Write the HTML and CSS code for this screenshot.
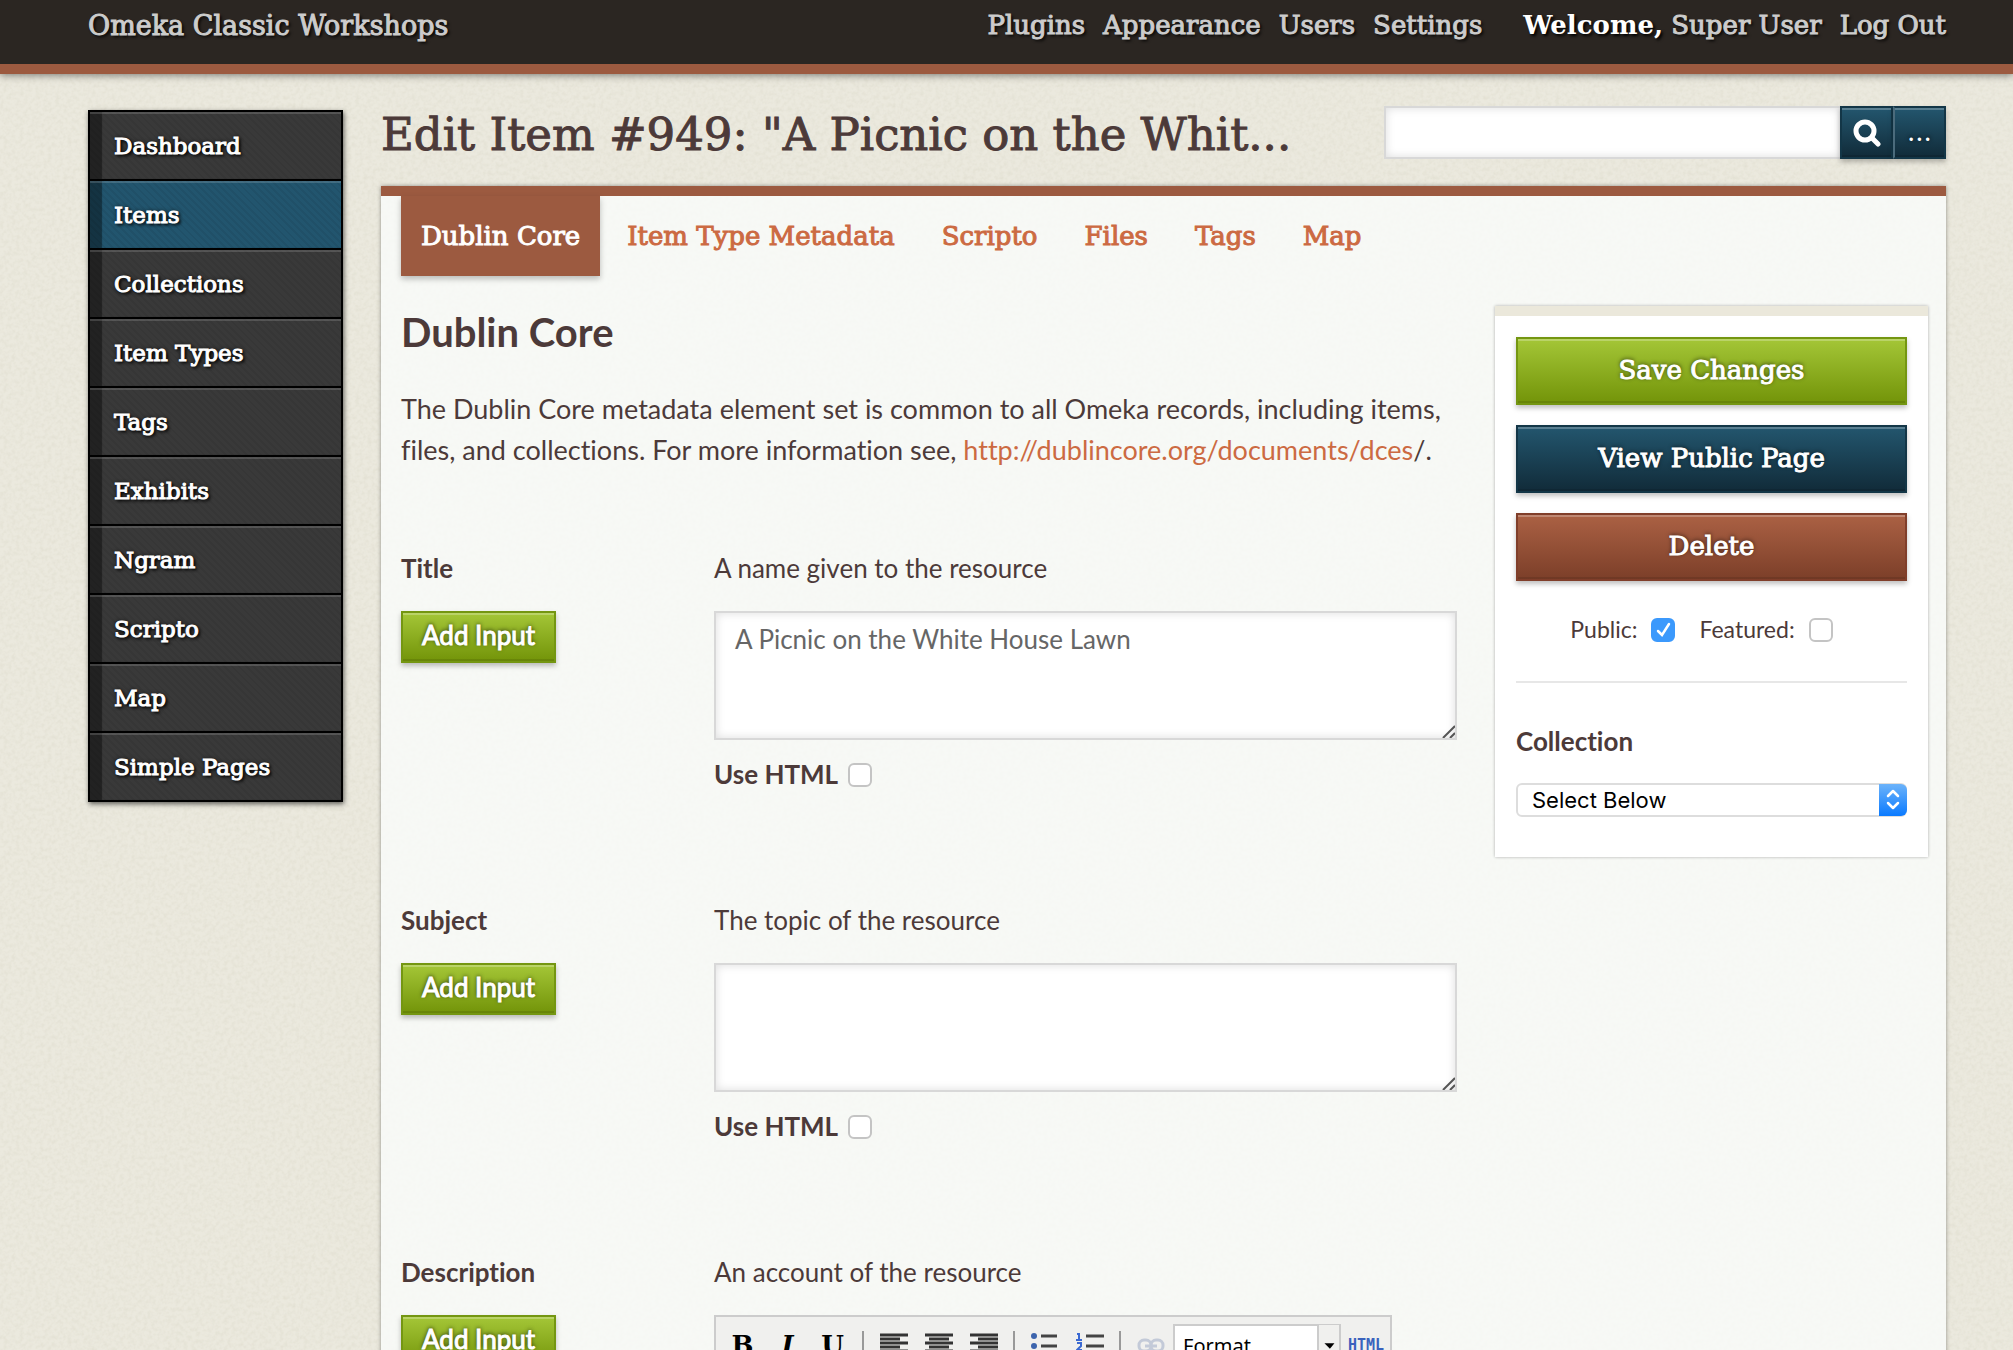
FILE: index.html
```html
<!DOCTYPE html>
<html lang="en">
<head>
  <meta charset="UTF-8">
  <meta name="viewport" content="width=device-width, initial-scale=1.0">
  <title>Edit Item #949 - Omeka Classic Workshops</title>
  <link rel="stylesheet" href="styles.css">
</head>
<body>
  <header id="header">
    <a class="site-title" href="#">Omeka Classic Workshops</a>
    <nav class="global-nav">
      <a href="#">Plugins</a>
      <a href="#">Appearance</a>
      <a href="#">Users</a>
      <a href="#">Settings</a>
    </nav>
    <div class="user-nav">
      <span><b>Welcome,</b> <a href="#">Super User</a></span>
      <a href="#">Log Out</a>
    </div>
  </header>

  <div id="wrap">
    <ul id="content-nav">
      <li><a href="#">Dashboard</a></li>
      <li class="active"><a href="#">Items</a></li>
      <li><a href="#">Collections</a></li>
      <li><a href="#">Item Types</a></li>
      <li><a href="#">Tags</a></li>
      <li><a href="#">Exhibits</a></li>
      <li><a href="#">Ngram</a></li>
      <li><a href="#">Scripto</a></li>
      <li><a href="#">Map</a></li>
      <li><a href="#">Simple Pages</a></li>
    </ul>

    <main id="main">
      <div class="title-row">
        <h1>Edit Item #949: "A Picnic on the Whit...</h1>
        <form class="search">
          <input type="text" aria-label="Search">
          <button type="button" class="blue" aria-label="Submit search">
            <svg width="28" height="28" viewBox="0 0 28 28"><circle cx="12" cy="12" r="9" fill="none" stroke="#fff" stroke-width="5"/><path d="M19 19L25 25" stroke="#fff" stroke-width="5" stroke-linecap="round"/></svg>
          </button>
          <button type="button" class="blue">...</button>
        </form>
      </div>

      <div id="content">
        <ul class="tabs">
          <li class="current"><a href="#">Dublin Core</a></li>
          <li><a href="#">Item Type Metadata</a></li>
          <li><a href="#">Scripto</a></li>
          <li><a href="#">Files</a></li>
          <li><a href="#">Tags</a></li>
          <li><a href="#">Map</a></li>
        </ul>

        <div class="columns">
          <section class="elements">
            <h2>Dublin Core</h2>
            <p class="intro">The Dublin Core metadata element set is common to all Omeka records, including items, files, and collections. For more information see, <a href="#">http://dublincore.org/documents/dces</a>/.</p>

            <div class="field">
              <div class="field-name">
                <label for="title">Title</label>
                <button type="button" class="green">Add Input</button>
              </div>
              <div class="inputs">
                <p>A name given to the resource</p>
                <textarea id="title">A Picnic on the White House Lawn</textarea>
                <label class="use-html">Use HTML <input type="checkbox"></label>
              </div>
            </div>

            <div class="field">
              <div class="field-name">
                <label for="subject">Subject</label>
                <button type="button" class="green">Add Input</button>
              </div>
              <div class="inputs">
                <p>The topic of the resource</p>
                <textarea id="subject"></textarea>
                <label class="use-html">Use HTML <input type="checkbox"></label>
              </div>
            </div>

            <div class="field">
              <div class="field-name">
                <label for="description">Description</label>
                <button type="button" class="green">Add Input</button>
              </div>
              <div class="inputs">
                <p>An account of the resource</p>
                <div class="editor">
                  <div class="toolbar">
                    <button type="button"><b>B</b></button>
                    <button type="button"><b><i>I</i></b></button>
                    <button type="button"><b><u>U</u></b></button>
                    <span class="sep"></span>
                    <button type="button" aria-label="Align left"><svg width="28" height="24" viewBox="0 0 28 24"><path d="M0 2h28M0 6h20M0 10h28M0 14h20M0 18h28M0 22h20" stroke="#333" stroke-width="3"/></svg></button>
                    <button type="button" aria-label="Align center"><svg width="28" height="24" viewBox="0 0 28 24"><path d="M0 2h28M4 6h20M0 10h28M4 14h20M0 18h28M4 22h20" stroke="#333" stroke-width="3"/></svg></button>
                    <button type="button" aria-label="Align right"><svg width="28" height="24" viewBox="0 0 28 24"><path d="M0 2h28M8 6h20M0 10h28M8 14h20M0 18h28M8 22h20" stroke="#333" stroke-width="3"/></svg></button>
                    <span class="sep"></span>
                    <button type="button" aria-label="Bulleted list"><svg width="28" height="24" viewBox="0 0 28 24"><path d="M10 3h16M10 13h16M10 23h16" stroke="#444" stroke-width="3"/><circle cx="3" cy="3" r="3" fill="#3d64ad"/><circle cx="3" cy="13" r="3" fill="#3d64ad"/><circle cx="3" cy="22" r="3" fill="#3d64ad"/></svg></button>
                    <button type="button" aria-label="Numbered list"><svg width="28" height="24" viewBox="0 0 28 24"><path d="M10 3h18M10 13h18M10 23h18" stroke="#444" stroke-width="3"/><path d="M1 1h2v6M0 7h6M1 10h4v3l-4 4h5M1 20h4v4" fill="none" stroke="#3a69d2" stroke-width="2"/></svg></button>
                    <span class="sep"></span>
                    <button type="button" aria-label="Insert link"><svg width="28" height="24" viewBox="0 0 28 24"><g fill="none" stroke="#c3cad8" stroke-width="3"><rect x="2" y="7" width="12" height="11" rx="5"/><rect x="14" y="7" width="12" height="11" rx="5"/><path d="M8 13h12"/></g></svg></button>
                    <span class="format">
                      <select aria-label="Format"><option>Format</option></select>
                      <svg width="22" height="40" viewBox="0 0 22 40"><path d="M6 18h11l-5 6z" fill="#000"/></svg>
                    </span>
                    <button type="button" class="html">HTML</button>
                  </div>
                  <textarea id="description"></textarea>
                </div>
              </div>
            </div>
          </section>

          <aside id="save">
            <button type="button" class="big green">Save Changes</button>
            <button type="button" class="big blue">View Public Page</button>
            <button type="button" class="big red">Delete</button>
            <div class="flags">
              <label>Public: <input type="checkbox" checked></label>
              <label>Featured: <input type="checkbox"></label>
            </div>
            <div class="collection">
              <label for="collection">Collection</label>
              <div class="select">
                <select id="collection"><option>Select Below</option></select>
                <svg width="28" height="32" viewBox="0 0 28 32"><path d="M9 12l5-5 5 5M9 19l5 5 5-5" fill="none" stroke="#fff" stroke-width="2.500" stroke-linecap="round" stroke-linejoin="round"/></svg>
              </div>
            </div>
          </aside>
        </div>
      </div>
    </main>
  </div>
</body>
</html>
```

FILE: styles.css
```css
*{
  margin: 0;
  padding: 0;
  box-sizing: border-box;
}
html, body{
  height: 100vh;
  overflow: hidden;
}
body{
  display: flex;
  flex-direction: column;
  font: 26px/41px Lato, sans-serif;
  font-variant-ligatures: none;
  color: #4c3a39;
  /* paper grain */
  background: #ebe9de url("data:image/svg+xml,%3Csvg xmlns='http://www.w3.org/2000/svg' width='300' height='300'%3E%3Cfilter id='n'%3E%3CfeTurbulence type='fractalNoise' baseFrequency='.25' numOctaves='3' stitchTiles='stitch'/%3E%3CfeColorMatrix values='0 0 0 0 .5 0 0 0 0 .48 0 0 0 0 .35 .3 0 0 0 -.11'/%3E%3C/filter%3E%3Crect width='300' height='300' filter='url(%23n)'/%3E%3C/svg%3E");
}
ul{
  list-style: none;
}
a{
  color: #cc6a42;
  text-decoration: none;
}
button, input, select, textarea{
  font: inherit;
}
button{
  border: 0;
  cursor: pointer;
}

/* header */
#header{
  display: flex;
  flex: none;
  height: 74px;
  padding: 5px 67px 0 88px;
  font: 26px/41px "DejaVu Serif", serif;
  color: #fff;
  background: #2b2622;
  border-bottom: 10px solid #9c5a40;
  box-shadow: 0 1px 8px rgba(0,0,0,0.5);
  text-shadow: 2px 2px 3px #000;
}
#header a{
  color: #ccc;
  -webkit-text-stroke: 1px;
}
#header .site-title{
  margin-right: auto;
  font-size: 27px;
}
.global-nav, .user-nav{
  display: flex;
  gap: 18px;
}
.user-nav{
  margin-left: 41px;
}

#wrap{
  display: flex;
  gap: 38px;
  flex: 1;
  padding: 32px 67px 0 88px;
}

/* sidebar */
#content-nav{
  flex: none;
  align-self: flex-start;
  width: 255px;
  margin-top: 4px;
  border: 2px solid #000;
  box-shadow: 1px 2px 5px rgba(0,0,0,0.6);
}
#content-nav li{
  border-bottom: 2px solid #000;
  background: repeating-linear-gradient(45deg, rgba(0,0,0,0.06) 0 2px, transparent 2px 5px), #393939;
  box-shadow: inset 0 2px 0 rgba(255,255,255,0.15), inset 12px 0 1px rgba(0,0,0,0.4);
}
#content-nav li:last-child{
  border-bottom: 0;
}
#content-nav .active{
  background-color: #22556e;
}
#content-nav a{
  display: block;
  padding: 2px 24px 0;
  font: 23px/65px "DejaVu Serif", serif;
  color: #fff;
  -webkit-text-stroke: 1px;
  text-shadow: 0 0 4px #000, 2px 2px 3px #000;
}

#main{
  display: flex;
  flex-direction: column;
  flex: 1;
  min-width: 0;
}
.title-row{
  display: flex;
  justify-content: space-between;
  height: 80px;
}
h1{
  font: 45px/58px "DejaVu Serif", serif;
  -webkit-text-stroke: 1px;
  white-space: nowrap;
}
.search{
  display: flex;
  width: 562px;
  height: 53px;
}
.search input{
  flex: 1;
  min-width: 0;
  padding: 0 16px;
  border: 2px solid #d8d8d8;
  border-right: 0;
  background: #fff;
  box-shadow: inset 0 0 10px #ddd;
}
.search button{
  width: 53px;
  font-family: "DejaVu Serif", serif;
}
.search button + button{
  border-left-color: #4b6b7c;
}
.search svg{
  display: block;
  margin: 0 auto;
}

.green, .blue, .red{
  color: #fff;
  border: 2px solid #749611;
  background: linear-gradient(#a4c637, #739409);
  box-shadow: inset 0 2px 0 rgba(255,255,255,0.25), inset 0 -2px 0 rgba(0,0,0,0.1), 0 3px 5px rgba(0,0,0,0.25);
  text-shadow: 0 -1px 4px rgba(0,0,0,0.8);
}
.blue{
  border-color: #133647;
  background: linear-gradient(#23566e, #112b39);
}
.red{
  border-color: #803e2a;
  background: linear-gradient(#ab6144, #7c3f29);
}

/* content panel */
#content{
  flex: 1;
  padding: 0 18px 0 20px;
  border-top: 10px solid #9c5a40;
  background: rgba(250,253,251,0.8);
  background-clip: padding-box;
  box-shadow: 0 0 4px rgba(0,0,0,0.4);
}
.tabs{
  display: flex;
  gap: 7px;
}
.tabs a{
  display: block;
  padding: 0 20px;
  font: 26px/80px "DejaVu Serif", serif;
  -webkit-text-stroke: 1px;
}
.tabs .current a{
  color: #fff;
  background: #9c5a40;
  box-shadow: 0 3px 6px rgba(0,0,0,0.25);
}

.columns{
  display: flex;
  justify-content: space-between;
  align-items: flex-start;
}
.elements{
  width: 1056px;
}
h2{
  margin: 32px 0;
  font-size: 40px;
  line-height: 48px;
}
.intro{
  margin-bottom: 78px;
  font-size: 27px;
}
.field{
  display: flex;
  height: 352px;
}
.field-name{
  width: 313px;
  font-weight: bold;
}
.field-name label{
  display: block;
}
.field-name button{
  height: 52px;
  margin-top: 22px;
  padding: 0 19px 3px;
  font-weight: normal;
  -webkit-text-stroke: 1px;
}
.inputs{
  flex: 1;
}
.inputs p{
  margin-bottom: 22px;
}
textarea{
  display: block;
  width: 100%;
  height: 129px;
  padding: 6px 19px;
  color: #666;
  border: 2px solid #d8d8d8;
  background: #fff;
  box-shadow: inset 0 0 10px #ddd;
  outline: 0;
}
textarea::-webkit-scrollbar{
  width: 18px;
  height: 18px;
}
textarea::-webkit-resizer{
  background: url("data:image/svg+xml,%3Csvg xmlns='http://www.w3.org/2000/svg' width='18' height='18'%3E%3Cpath d='M3 15L15 3M10 15l5-5' stroke='%23555' stroke-width='2'/%3E%3C/svg%3E");
}
.use-html{
  display: flex;
  align-items: center;
  gap: 10px;
  margin-top: 14px;
  font-weight: bold;
}
input[type="checkbox"]{
  appearance: none;
  width: 24px;
  height: 24px;
  border: 2px solid #c4c4c4;
  border-radius: 6px;
  background: #fff;
}
input[type="checkbox"]:checked{
  border-color: #3b99fc;
  background: #3b99fc url("data:image/svg+xml,%3Csvg xmlns='http://www.w3.org/2000/svg' width='20' height='20'%3E%3Cpath d='M5 11l4 4 7-11' fill='none' stroke='%23fff' stroke-width='2.500' stroke-linecap='round'/%3E%3C/svg%3E");
}

/* html editor */
.editor{
  width: 678px;
  border: 2px solid #ccc;
  background: #f0f0ee;
}
.toolbar{
  display: flex;
  height: 54px;
  padding: 6px 0 6px 4px;
}
.toolbar button{
  flex: none;
  width: 45px;
  height: 44px;
  background: none;
  font: 26px/44px "DejaVu Serif", serif;
  color: #000;
}
.toolbar svg{
  display: block;
  margin: 0 auto;
}
.sep{
  flex: none;
  width: 2px;
  height: 32px;
  margin: 8px 7px;
  background: #999;
}
.format{
  position: relative;
  flex: none;
  width: 168px;
}
.format select{
  appearance: none;
  width: 100%;
  height: 44px;
  padding: 0 8px;
  border: 2px solid #ccc;
  border-radius: 0;
  background: #fff;
  font: 20px "Noto Sans", sans-serif;
  color: #000;
}
.format svg{
  position: absolute;
  top: 2px;
  right: 2px;
  border-left: 2px solid #ccc;
  background: #f0f0ee;
  pointer-events: none;
}
.toolbar .html{
  width: 50px;
  font: bold 15px/44px "DejaVu Sans Mono", monospace;
  color: #3a62bd;
}

/* save panel */
#save{
  width: 433px;
  margin-top: 30px;
  padding: 21px 21px 40px;
  border-top: 10px solid #ebe8db;
  background: #fff;
  box-shadow: 0 0 3px rgba(0,0,0,0.3);
}
.big{
  display: block;
  width: 100%;
  height: 68px;
  margin-bottom: 20px;
  padding-bottom: 2px;
  font: 26px "DejaVu Serif", serif;
  -webkit-text-stroke: 1px;
}
.flags{
  display: flex;
  justify-content: center;
  gap: 24px;
  height: 82px;
  padding: 8px 20px 0 0;
  border-bottom: 2px solid #e7e7e7;
  font-size: 23px;
}
.flags label{
  display: flex;
  align-items: center;
  gap: 14px;
  height: 41px;
}
.collection{
  padding-top: 38px;
}
.collection label{
  display: block;
  margin-bottom: 21px;
  font-weight: bold;
}
.select{
  position: relative;
}
.select select{
  appearance: none;
  display: block;
  width: 100%;
  height: 34px;
  padding: 0 14px;
  border: 2px solid #ddd;
  border-radius: 6px;
  background: #fff;
  font: 22px Inter, sans-serif;
  color: #000;
}
.select svg{
  position: absolute;
  top: 1px;
  right: 0;
  border-radius: 0 6px 6px 0;
  background: linear-gradient(#6cb3fa, #0a7aff);
  pointer-events: none;
}
```
